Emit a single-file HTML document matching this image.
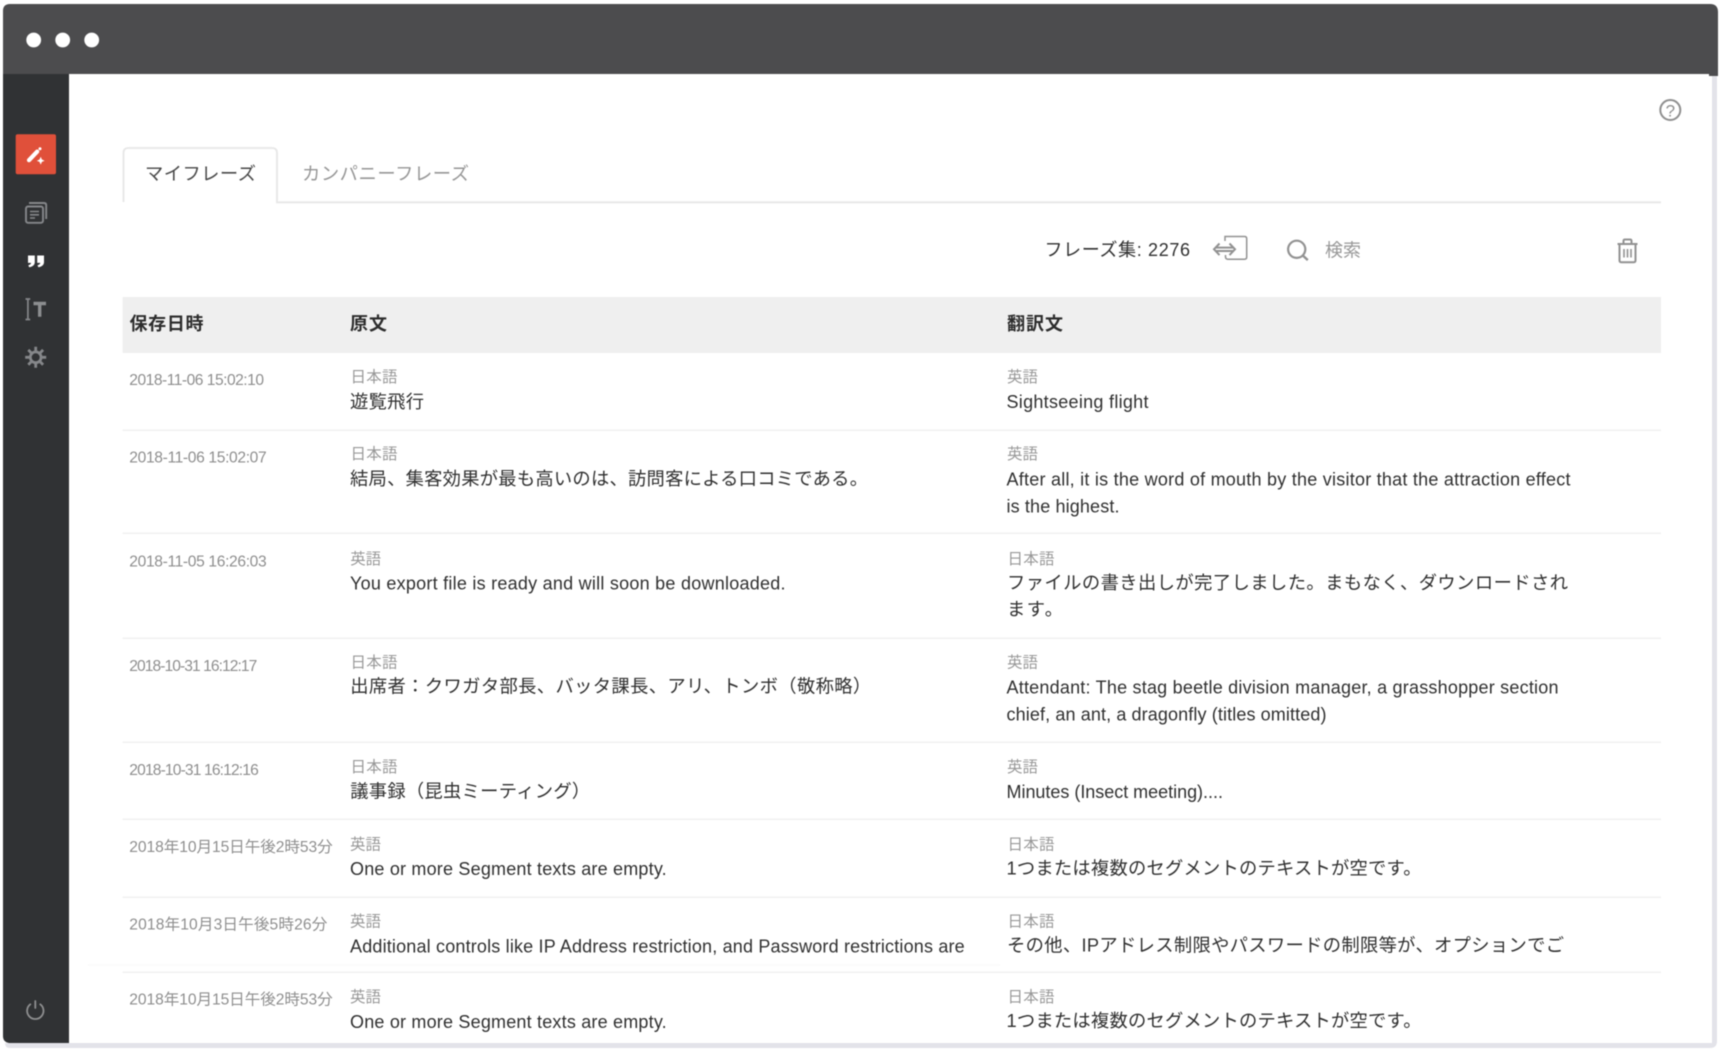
<!DOCTYPE html>
<html lang="ja">
<head>
<meta charset="utf-8">
<title>フレーズ集</title>
<style>
html,body{margin:0;padding:0;background:#fff;width:1721px;height:1049px;overflow:hidden}
svg{display:block;filter:blur(.6px)}
text{font-family:"Liberation Sans","Noto Sans CJK JP",sans-serif}
.d{font-size:15.6px;fill:#8e8e8e}
.l{font-size:15.5px;fill:#989898}
.t{font-size:18.3px;fill:#303030}
.e{font-size:18px;fill:#303030}
.h{font-size:18px;font-weight:700;fill:#2c2c2c}
</style>
</head>
<body>
<svg width="1721" height="1049" viewBox="0 0 1721 1049" xmlns="http://www.w3.org/2000/svg">
<rect width="1721" height="1049" fill="#fff"/>
<!-- window shadow edges -->
<path d="M5 1043H1712V74h5V1041q0 7-7 7H10q-5 0-5-5z" fill="#e3e3e9"/>
<!-- title bar -->
<path d="M3 74V11q0-7 7-7H1710q8 0 8 8V76H1709V74z" fill="#4c4c4e"/>
<circle cx="33.7" cy="40" r="7.4" fill="#fff"/>
<circle cx="62.7" cy="40" r="7.4" fill="#fff"/>
<circle cx="91.7" cy="40" r="7.4" fill="#fff"/>
<!-- sidebar -->
<path d="M3 74H69V1043H9q-6-1-6-7z" fill="#303234"/>
<rect x="15.7" y="134.3" width="40.3" height="40" rx="2" fill="#e0503a"/>
<path d="M29 160.2L37.2 151.6" stroke="#fff" stroke-width="4.2" stroke-linecap="round" fill="none"/>
<circle cx="40" cy="148.8" r="1.5" fill="#fff"/>
<path d="M40.7 156.8l1.2 2.7 2.7 1.2-2.7 1.2-1.2 2.7-1.2-2.7-2.7-1.2 2.7-1.2z" fill="#fff"/>
<!-- docs icon -->
<g fill="none" stroke="#85878a" stroke-width="1.9">
<rect x="26" y="206.5" width="17" height="16.3" rx="2"/>
<path d="M29 203h15q2.2 0 2.2 2.2V219"/>
<path d="M30 211.5h9M30 214.8h9M30 218h5" stroke-width="1.6"/>
</g>
<!-- quote icon -->
<path d="M28 255.5h6.8v6.8c0 2.6-2.2 4.4-5.6 5l-.9-2c1.7-.4 2.6-1.1 2.8-2.4H28z" fill="#fff"/>
<path d="M37.2 255.5H44v6.8c0 2.6-2.2 4.4-5.6 5l-.9-2c1.7-.4 2.6-1.1 2.8-2.4h-3.1z" fill="#fff"/>
<!-- text-size icon -->
<path d="M25.5 299h4.7M25.5 319.5h4.7M27.9 299v20.5" stroke="#85878a" stroke-width="1.7" fill="none"/>
<path d="M33.5 303.5h12.5M39.7 303.5V316.7" stroke="#8c8e90" stroke-width="3.4" fill="none"/>
<!-- gear icon -->
<g fill="none" stroke="#85878a">
<circle cx="35.7" cy="357.3" r="5.4" stroke-width="2.8"/>
<path d="M35.7 346.8v4M35.7 363.8v4M25.2 357.3h4M42.2 357.3h4M28.3 349.9l2.8 2.8M40.3 361.9l2.8 2.8M28.3 364.7l2.8-2.8M40.3 352.7l2.8-2.8" stroke-width="2.8"/>
</g>
<!-- power icon -->
<path d="M30.3 1004.3a8.2 8.2 0 1 0 10 0M35.3 1001v7" fill="none" stroke="#8e8f90" stroke-width="1.8" stroke-linecap="round"/>

<!-- help -->
<circle cx="1670.3" cy="110" r="10" fill="none" stroke="#8f8f8f" stroke-width="2"/>
<text x="1670.3" y="116.5" text-anchor="middle" style="font-size:17px;fill:#8f8f8f">?</text>

<!-- tabs -->
<path d="M123.5 202V153q0-5 5-5H272q5 0 5 5V202.3H1661" fill="none" stroke="#e7e7e7" stroke-width="1.8"/>
<text x="145" y="180" class="t" style="fill:#484848" textLength="111">マイフレーズ</text>
<text x="302" y="180" class="t" style="fill:#969696" textLength="167">カンパニーフレーズ</text>

<!-- toolbar -->
<text x="1044.5" y="256" class="t" style="font-size:18px" textLength="145.5">フレーズ集: 2276</text>
<g fill="none" stroke="#929292" stroke-width="2">
<path d="M1225 241v-4.5h19.5q2.2 0 2.2 2.2v18.3q0 2.2-2.2 2.2H1228q-2.5 0-2.5-2.5V255" stroke-width="1.5"/>
<path d="M1219.5 243.5l-5.5 5.8 5.5 5.8M1229.5 243.5l5.5 5.8-5.5 5.8M1216 247.6h17M1216 251h17" stroke-width="2"/>
<circle cx="1296.7" cy="249.3" r="8.6" stroke-width="2.2"/>
<path d="M1302.8 255.5l5 4.6" stroke-width="2.4"/>
<path d="M1617.5 244h20M1623.5 244v-3q0-1.5 1.5-1.5h5q1.5 0 1.5 1.5v3"/>
<path d="M1619.5 244v16.5q0 1.7 1.7 1.7h12.6q1.7 0 1.7-1.7V244"/>
<path d="M1624 249v8.5M1627.5 249v8.5M1631 249v8.5" stroke-width="1.6"/>
</g>
<text x="1325" y="256.5" class="l" style="font-size:18px" textLength="36">検索</text>

<!-- header -->
<rect x="122.7" y="297" width="1538.3" height="56" fill="#efefef"/>
<text x="129.5" y="330" class="h" textLength="74">保存日時</text>
<text x="350" y="330" class="h" textLength="37">原文</text>
<text x="1007" y="330" class="h" textLength="56">翻訳文</text>

<!-- row lines -->
<g stroke="#f0f0f0" stroke-width="1.5">
<path d="M122.7 430.3H1661M122.7 533.3H1661M122.7 638.3H1661M122.7 742.3H1661M122.7 819.3H1661M122.7 897.3H1661M122.7 972.3H1661"/>
<path d="M88 965H1000" stroke="#f8f8f8" stroke-width="1"/>
</g>

<!-- row 1 -->
<text x="129.3" y="385" class="d" textLength="134.7">2018-11-06 15:02:10</text>
<text x="350.5" y="382" class="l" textLength="47">日本語</text>
<text x="350" y="408" class="t" textLength="74">遊覧飛行</text>
<text x="1007" y="382" class="l" textLength="31">英語</text>
<text x="1006.5" y="408.2" class="e" textLength="142">Sightseeing flight</text>

<!-- row 2 -->
<text x="129.3" y="462.4" class="d" textLength="137.4">2018-11-06 15:02:07</text>
<text x="350.5" y="459" class="l" textLength="47">日本語</text>
<text x="350" y="485" class="t" textLength="518">結局、集客効果が最も高いのは、訪問客による口コミである。</text>
<text x="1007" y="459" class="l" textLength="31">英語</text>
<text x="1006.5" y="485.7" class="e" textLength="564">After all, it is the word of mouth by the visitor that the attraction effect</text>
<text x="1006.5" y="512.4" class="e" textLength="113">is the highest.</text>

<!-- row 3 -->
<text x="129.3" y="566.6" class="d" textLength="137.4">2018-11-05 16:26:03</text>
<text x="350.2" y="564" class="l" textLength="31">英語</text>
<text x="350" y="589.5" class="e" textLength="435.5">You export file is ready and will soon be downloaded.</text>
<text x="1007.5" y="564" class="l" textLength="47">日本語</text>
<text x="1007" y="589" class="t" textLength="561">ファイルの書き出しが完了しました。まもなく、ダウンロードされ</text>
<text x="1007" y="615.3" class="t" textLength="56">ます。</text>

<!-- row 4 -->
<text x="129.3" y="671" class="d" textLength="128">2018-10-31 16:12:17</text>
<text x="350.5" y="667.5" class="l" textLength="47">日本語</text>
<text x="350.2" y="692.7" class="t" textLength="521">出席者：クワガタ部長、バッタ課長、アリ、トンボ（敬称略）</text>
<text x="1007" y="667.5" class="l" textLength="31">英語</text>
<text x="1006.5" y="693.7" class="e" textLength="552">Attendant: The stag beetle division manager, a grasshopper section</text>
<text x="1006.5" y="720.4" class="e" textLength="320">chief, an ant, a dragonfly (titles omitted)</text>

<!-- row 5 -->
<text x="129.3" y="775" class="d" textLength="129.5">2018-10-31 16:12:16</text>
<text x="350.5" y="772" class="l" textLength="47">日本語</text>
<text x="350.2" y="797.3" class="t" textLength="240">議事録（昆虫ミーティング）</text>
<text x="1007" y="772" class="l" textLength="31">英語</text>
<text x="1006.5" y="797.8" class="e" textLength="216.5">Minutes (Insect meeting)....</text>

<!-- row 6 -->
<text x="129.3" y="852" class="d" textLength="203.4">2018年10月15日午後2時53分</text>
<text x="350" y="849.3" class="l" textLength="31">英語</text>
<text x="350" y="875" class="e" textLength="316.7">One or more Segment texts are empty.</text>
<text x="1007.5" y="849.3" class="l" textLength="47">日本語</text>
<text x="1006.5" y="874.5" class="t" textLength="415">1つまたは複数のセグメントのテキストが空です。</text>

<!-- row 7 -->
<text x="129.3" y="929.7" class="d" textLength="198">2018年10月3日午後5時26分</text>
<text x="350" y="926.7" class="l" textLength="31">英語</text>
<text x="350" y="952.5" class="e" textLength="614.7">Additional controls like IP Address restriction, and Password restrictions are</text>
<text x="1007.5" y="926.7" class="l" textLength="47">日本語</text>
<text x="1007" y="951.5" class="t" textLength="557">その他、IPアドレス制限やパスワードの制限等が、オプションでご</text>

<!-- row 8 -->
<text x="129.3" y="1004.7" class="d" textLength="203.4">2018年10月15日午後2時53分</text>
<text x="350" y="1002" class="l" textLength="31">英語</text>
<text x="350" y="1028" class="e" textLength="316.7">One or more Segment texts are empty.</text>
<text x="1007.5" y="1002" class="l" textLength="47">日本語</text>
<text x="1006.5" y="1027" class="t" textLength="415">1つまたは複数のセグメントのテキストが空です。</text>
</svg>
</body>
</html>
